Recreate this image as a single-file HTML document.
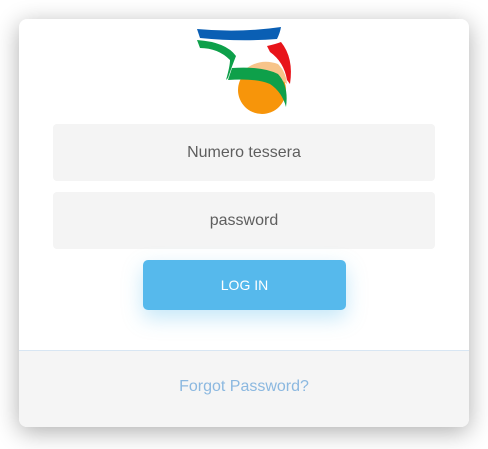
<!DOCTYPE html>
<html><head><style>
html,body{margin:0;padding:0;background:#fff;width:488px;height:449px;overflow:hidden;font-family:"Liberation Sans",sans-serif}
.card{position:absolute;left:19px;top:19px;width:450px;height:408px;background:#fff;border-radius:8px;box-shadow:0 5px 24px rgba(0,0,0,0.32);overflow:hidden}
.inp{position:absolute;left:34px;width:382px;height:57px;background:#f4f4f4;border-radius:4px;color:#5e5e5e;font-size:16px;text-align:center;line-height:57px}
.btn{position:absolute;left:124px;top:241px;width:203px;height:50px;background:#56b9ec;border-radius:5px;color:#fff;font-size:14px;text-align:center;line-height:50px;box-shadow:0 8px 20px rgba(86,185,236,0.35)}
.foot{position:absolute;left:0;top:331px;width:450px;height:77px;background:#f5f5f5;border-top:1px solid #d8e6f3;text-align:center;line-height:72px;color:#8bb8e0;font-size:16px}
</style></head><body>
<div class="card">
<svg style="position:absolute;left:0;top:0" width="450" height="110">
<g transform="translate(-19,-19)">
<circle cx="262" cy="90" r="24" fill="#f7950a"/>
<path d="M238 76 Q256 56 278 64 Q286 72 287 84 Q266 68 240 80Z" fill="#f7c48a"/>
<path d="M197 29 Q240 33 281 27 Q280 33 277 39 Q240 42 200 38 Z" fill="#0a5fb4"/>
<path d="M197 40 Q226 42 236 56 Q232 66 228 78 L226 80 Q230 66 230 60 Q218 48 200 48 Z" fill="#0ea04a"/>
<path d="M232 68 Q262 66 278 74 Q289 86 286 107 Q282 92 270 84 Q256 78 228 80 Z" fill="#0ea04a"/>
<path d="M267 46 Q276 44 281 42 Q294 58 290 84 L287 80 Q284 62 270 52 Z" fill="#e8141a"/>
</g>
</svg>
<div class="inp" style="top:105px">Numero tessera</div>
<div class="inp" style="top:173px">password</div>
<div class="btn">LOG IN</div>
<div class="foot">Forgot Password?</div>
</div>
</body></html>
